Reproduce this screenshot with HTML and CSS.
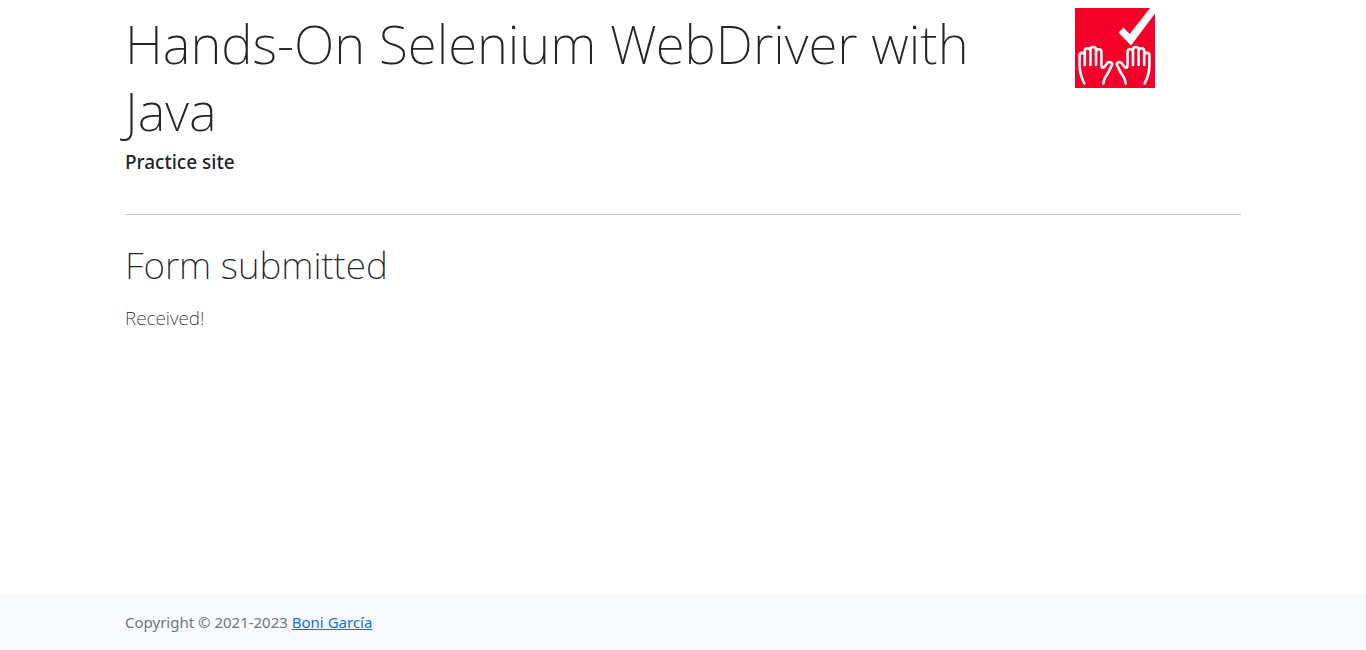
FILE: index.html
```html
<!DOCTYPE html>
<html lang="en">
<head>
<meta charset="utf-8">
<meta name="viewport" content="width=device-width, initial-scale=1">
<title>Hands-On Selenium WebDriver with Java</title>
<link rel="stylesheet" href="styles.css">
</head>
<body>
<main class="container">
  <header class="masthead">
    <div class="masthead-text">
      <h1 class="site-title">Hands-On Selenium WebDriver with Java</h1>
      <h2 class="site-subtitle">Practice site</h2>
    </div>
    <div class="masthead-logo">
      <svg class="logo" viewBox="0 0 80 80" role="img" aria-label="Two raised hands and a check mark">
        <defs>
          <g id="hand" fill="none" stroke="#fff" stroke-width="2.6" stroke-linecap="round" stroke-linejoin="round">
            <path d="M9.3 75.5C6.5 70 4.6 64 4.6 57V47.5a2.6 2.6 0 0 1 5.2 0V57M9.8 48V43a2.8 2.8 0 0 1 5.6 0V57M15.4 43.500V41.800a2.800 2.800 0 0 1 5.600 0V57M21 45V44a2.700 2.700 0 0 1 5.400 0V56C26.400 59.500 27.500 61 29.500 58.700L32.500 55C34.600 52.800 38.200 54.800 36.700 57.600C34.500 61.600 33.500 65 31 68C29 70.300 28.800 72.500 28.300 75.500"/>
          </g>
        </defs>
        <path fill="#f50029" d="M0 0H80V80H0Z"/>
        <path fill="#fff" d="M43.500 24.500L48.500 19.500L54.700 26L75 0H80V5.500L56 37.500Z"/>
        <use href="#hand"/>
        <use href="#hand" transform="matrix(-1 0 0 1 79 0)"/>
      </svg>
    </div>
  </header>
  <hr class="divider">
  <section>
    <h2 class="page-title">Form submitted</h2>
    <p class="lead">Received!</p>
  </section>
</main>
<footer class="footer">
  <div class="container">
    <span>Copyright © 2021-2023 <a class="link" href="#">Boni García</a></span>
  </div>
</footer>
</body>
</html>
```
FILE: styles.css
```css
* { box-sizing: border-box; }
body {
  display: flex;
  flex-direction: column;
  min-height: 100vh;
  margin: 0;
  background: #fff;
  color: #212529;
  font-family: "Noto Sans", "Open Sans", sans-serif;
  font-size: 15px;
  line-height: 24px;
}
.container {
  width: 100%;
  max-width: 1140px;
  margin: 0 auto;
  padding: 0 12px;
}
.masthead {
  display: grid;
  grid-template-columns: 5fr 1fr;
  margin: 0 -12px;
  padding-top: 8px;
}
.masthead-text { padding: 2px 12px 0; }
.masthead-logo { padding: 0 12px; }
.logo {
  display: block;
  width: 80px;
  height: 80px;
}
.site-title {
  margin: 0 0 6px;
  font-size: 53px;
  font-weight: 200;
  line-height: 67px;
}
.site-subtitle {
  margin: 0 0 8px;
  font-size: 19px;
  font-weight: 500;
  line-height: 24px;
}
.divider {
  height: 1px;
  margin: 32px 0 26px;
  border: 0;
  background: #c8c9ca;
}
.page-title {
  margin: 0 0 14px;
  font-size: 37px;
  font-weight: 200;
  line-height: 48px;
}
.lead {
  margin: 0 0 16px;
  font-size: 19px;
  font-weight: 200;
  line-height: 30px;
}
.footer {
  margin-top: auto;
  padding: 16px 0;
  background: #f8f9fa;
  color: #6c757d;
}
.link { color: #0d6efd; }
```
